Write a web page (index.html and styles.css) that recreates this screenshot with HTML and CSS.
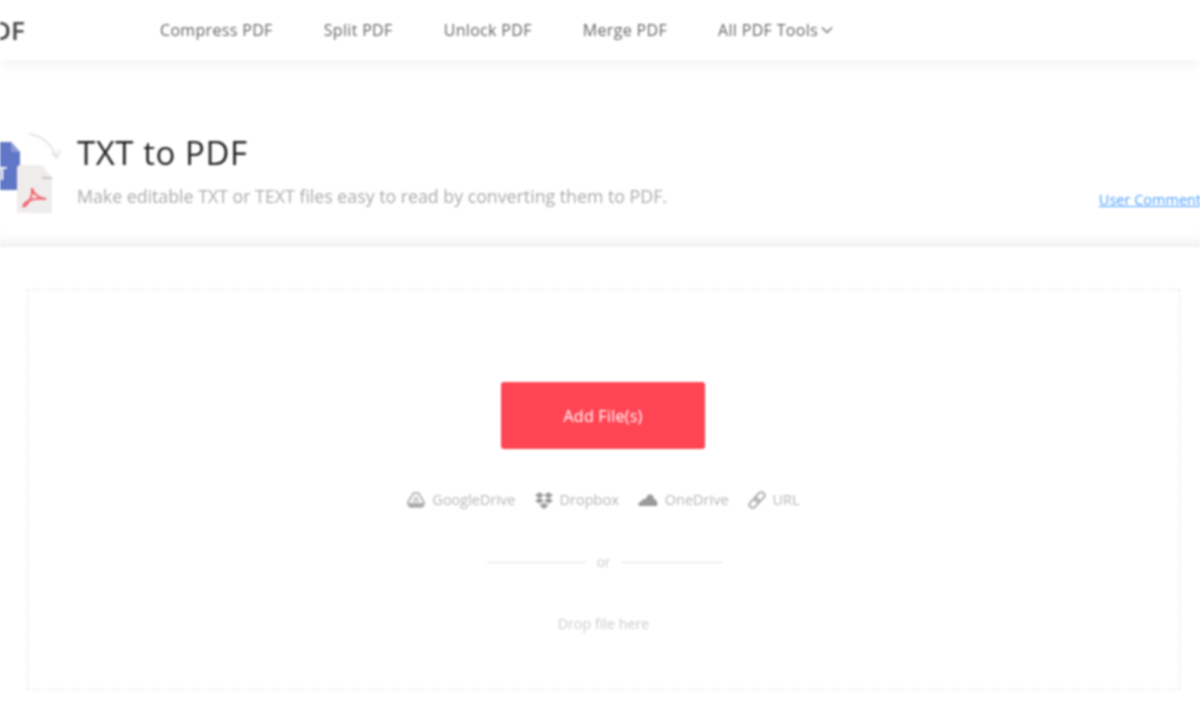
FILE: index.html
```html
<!DOCTYPE html>
<html lang="en">
<head>
<meta charset="UTF-8">
<meta name="viewport" content="width=device-width, initial-scale=1.0">
<title>TXT to PDF</title>
<link rel="stylesheet" href="styles.css">
</head>
<body>
<div class="page">
    <header class="topbar">
        <div class="logo">PDF</div>
        <nav class="nav">
            <a href="#">Compress PDF</a>
            <a href="#">Split PDF</a>
            <a href="#">Unlock PDF</a>
            <a href="#">Merge PDF</a>
            <a href="#">All PDF Tools
                <svg class="caret" width="12" height="8" viewBox="0 0 12 8"><path d="M1 1.500l5 5 5-5" fill="none" stroke="#777" stroke-width="1.500"/></svg>
            </a>
        </nav>
    </header>

    <section class="hero">
        <svg class="hero-icon" width="62" height="90" viewBox="0 0 62 90">
            <path d="M29 4c12 2 22 9 27 22" fill="none" stroke="#ddd" stroke-width="1.500"/>
            <path d="M60 20l-3 8-5-5" fill="none" stroke="#ddd" stroke-width="1.500"/>
            <path d="M0 12h11l9 10v38h-20z" fill="#6076c6"/>
            <path d="M11 12v10h9z" fill="#8b9bd8"/>
            <text x="-3" y="50" class="hero-icon-t">T</text>
            <path d="M19 35h23l10 13v35h-35v-46z" fill="#efedec"/>
            <path d="M42 48h10" stroke="#999" stroke-width="1"/>
            <path d="M32 58c1 6-2 14-7 18-3 2-2-2 3-5 5-2 12-3 18-2-6 0-13-5-14-11z" fill="none" stroke="#f0606c" stroke-width="2"/>
        </svg>
        <div class="hero-text">
            <h1>TXT to PDF</h1>
            <p>Make editable TXT or TEXT files easy to read by converting them to PDF.</p>
        </div>
        <a class="comments" href="#">User Comments</a>
    </section>

    <main class="main">
        <div class="dropzone">
            <button class="add-btn">Add File(s)</button>
            <div class="sources">
                <span class="source">
                    <svg width="18" height="16" viewBox="0 0 18 16"><path d="M6.500 1h5l6 10-2.500 4h-12l-2.500-4z" fill="none" stroke="#aaa" stroke-width="1.600"/><path d="M1.500 11h15v4h-14z" fill="#aaa"/><path d="M9 3l-4 7h8z" fill="#ccc"/></svg>
                    GoogleDrive
                </span>
                <span class="source">
                    <svg width="18" height="17" viewBox="0 0 18 17"><path d="M4.500 0.500l4 2.700-4 2.800-4-2.800zM13.500 0.500l4 2.700-4 2.800-4-2.800zM4.500 6l4 2.700-4 2.800-4-2.800zM13.500 6l4 2.700-4 2.800-4-2.800zM9 11l4 2.700-4 3-4-3z" fill="#999" stroke="#999" stroke-width="0.600"/></svg>
                    Dropbox
                </span>
                <span class="source">
                    <svg width="20" height="14" viewBox="0 0 20 14"><path d="M1 13c-1.500-2 0-4.500 2.500-4.500 0-2 2.500-3 4-2C8.500 3 10 1.500 12 1.500c2.500 0 4 2 4 4.500 2.500 0 4 3.500 3 7z" fill="#999"/></svg>
                    OneDrive
                </span>
                <span class="source">
                    <svg width="18" height="18" viewBox="0 0 18 18"><g fill="none" stroke="#aaa" stroke-width="1.800"><rect x="8.500" y="0.500" width="6.500" height="11" rx="3.200" transform="rotate(45 11.750 6)"/><rect x="3" y="6.500" width="6.500" height="11" rx="3.200" transform="rotate(45 6.250 12)"/></g></svg>
                    URL
                </span>
            </div>
            <div class="or-row"><span class="or-line"></span><span>or</span><span class="or-line or-line-long"></span></div>
            <div class="drop-hint">Drop file here</div>
        </div>
    </main>
</div>
</body>
</html>
```

FILE: styles.css
```css
* {
    box-sizing: border-box;
}
html, body {
    margin: 0;
    height: 720px;
    overflow: hidden;
    background-color: #fff;
}
.page {
    font-family: "Open Sans", Arial, sans-serif;
    width: 1200px;
    height: 720px;
    overflow: hidden;
    filter: blur(0.8px);
}
a {
    text-decoration: none;
    color: inherit;
}

/* top bar */
.topbar {
    display: flex;
    align-items: center;
    height: 60px;
    box-shadow: 0 6px 12px rgba(0,0,0,0.05);
    position: relative;
}
.logo {
    flex: 0 0 184px;
    margin-left: -24px;
    font-size: 26px;
    font-weight: 600;
    color: #444;
}
.nav {
    display: flex;
    gap: 51px;
    font-size: 16px;
    letter-spacing: 0.33px;
    color: #666;
}
.caret {
    margin-left: -2px;
    vertical-align: 2px;
}

/* title block */
.hero {
    display: flex;
    height: 187px;
    box-shadow: inset 0 -14px 14px -10px rgba(0,0,0,0.08);
}
.hero-icon {
    flex: none;
    margin: 70px 15px 0 0;
}
.hero-icon-t {
    font-size: 18px;
    font-weight: 600;
    fill: #fff;
}
.hero-text {
    flex: 1;
    padding-top: 70px;
}
.hero-text h1 {
    margin: 0;
    font-size: 33px;
    font-weight: 400;
    letter-spacing: 0.55px;
    line-height: 46px;
    color: #222;
}
.hero-text p {
    margin: 8px 0 0;
    font-size: 17.760px;
    line-height: 25px;
    color: #aaa;
}
.comments {
    flex: none;
    align-self: flex-start;
    margin: 130px -8px 0 0;
    font-size: 14.500px;
    line-height: 20px;
    color: #4a9eff;
    text-decoration: underline;
}

/* upload area */
.main {
    padding: 42px 20px 0 27px;
}
.dropzone {
    display: flex;
    flex-direction: column;
    align-items: center;
    height: 401px;
    padding-top: 92px;
    border: 1px dashed #e6e6e6;
}
.add-btn {
    width: 204px;
    height: 67px;
    margin-right: 1px;
    border: none;
    border-radius: 3px;
    background-color: #ff4554;
    color: #fff;
    font-family: inherit;
    font-size: 16px;
    letter-spacing: 0.25px;
}
.sources {
    display: flex;
    gap: 19px;
    margin-top: 41px;
    font-size: 14.500px;
    line-height: 20px;
    color: #b5b5b5;
}
.source {
    display: flex;
    align-items: center;
    gap: 7px;
}
.or-row {
    display: flex;
    align-items: center;
    gap: 10px;
    margin: 42px 0 0 3px;
    font-size: 14px;
    line-height: 20px;
    color: #ccc;
}
.or-line {
    width: 99px;
    height: 1px;
    background-color: #e2e2e2;
}
.or-line-long {
    width: 102px;
}
.drop-hint {
    margin-top: 42px;
    font-size: 14.300px;
    line-height: 20px;
    color: #ccc;
}
```
